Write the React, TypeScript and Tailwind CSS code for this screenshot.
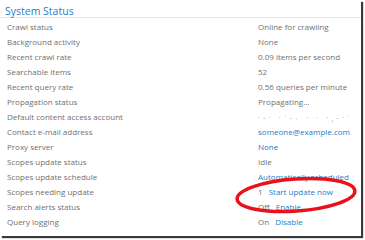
import React from 'react';

type Row = { label: string; value: React.ReactNode };

const link = 'text-[#2a7bc6]';

const rows: Row[] = [
  { label: 'Crawl status', value: 'Online for crawling' },
  { label: 'Background activity', value: 'None' },
  { label: 'Recent crawl rate', value: '0.09 items per second' },
  { label: 'Searchable items', value: '52' },
  { label: 'Recent query rate', value: '0.56 queries per minute' },
  { label: 'Propagation status', value: 'Propagating...' },
  {
    label: 'Default content access account',
    value: <span className="text-[#3d8ad4] opacity-70 blur-[0.5px] tracking-[3px]">·-· ·ˈ-˒ ·  ·  ·˛-·ˈ</span>,
  },
  { label: 'Contact e-mail address', value: <span className={link}>someone@example.com</span> },
  { label: 'Proxy server', value: <span className={link}>None</span> },
  { label: 'Scopes update status', value: 'Idle' },
  { label: 'Scopes update schedule', value: <span className={link}>Automatically scheduled</span> },
  {
    label: 'Scopes needing update',
    value: (
      <span>
        1 <span className={`${link} ml-[4px]`}>Start update now</span>
      </span>
    ),
  },
  {
    label: 'Search alerts status',
    value: (
      <span>
        Off <span className={`${link} ml-[4px]`}>Enable</span>
      </span>
    ),
  },
  {
    label: 'Query logging',
    value: (
      <span>
        On <span className={`${link} ml-[4px]`}>Disable</span>
      </span>
    ),
  },
];

export default function App() {
  return (
    <div className="w-[365px] h-[240px] bg-white overflow-hidden">
      <div className="relative w-[361px] h-[236px] bg-white shadow-[2px_2px_1px_#3a3a3a] font-['Open_Sans',sans-serif]">
        <div className="px-[5px] pt-[4px] h-[18px] text-[10.5px] leading-[14px] text-[#2a7bc6] border-b border-[#e4e4e4]">
          System Status
        </div>
        <div className="pt-[1px]">
          {rows.map((r) => (
            <div key={r.label} className="flex h-[15px] items-center text-[8px] text-[#707070]">
              <div className="w-[258px] pl-[7px]">{r.label}</div>
              <div className="whitespace-nowrap">{r.value}</div>
            </div>
          ))}
        </div>
        <svg
          className="absolute left-0 top-0 pointer-events-none"
          width="361"
          height="236"
          viewBox="0 0 361 236"
        >
          <ellipse
            cx="296"
            cy="195"
            rx="59"
            ry="16"
            transform="rotate(-4 296 195)"
            fill="none"
            stroke="#e8121c"
            strokeWidth="3.5"
          />
        </svg>
      </div>
    </div>
  );
}
